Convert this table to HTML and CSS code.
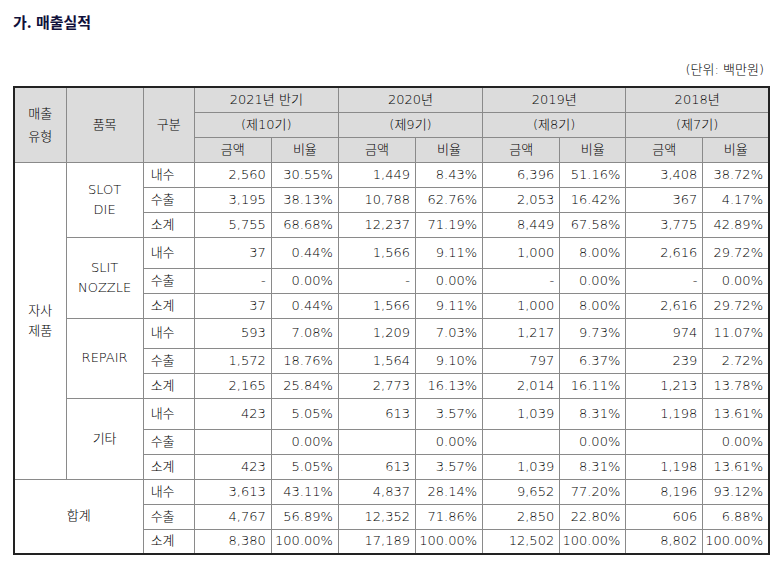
FILE: index.html
```html
<!DOCTYPE html>
<html lang="ko">
<head>
<meta charset="utf-8">
<title>매출실적</title>
<link rel="stylesheet" href="styles.css">
</head>
<body>
<div class="page">
  <h1 class="title">가. 매출실적</h1>
  <div class="unit">(단위: 백만원)</div>
  <table class="sales">
    <colgroup>
      <col class="c-type"><col class="c-item"><col class="c-kind">
      <col class="c-amt"><col class="c-rate">
      <col class="c-amt"><col class="c-rate">
      <col class="c-amt"><col class="c-rate2">
      <col class="c-amt"><col class="c-rate2">
    </colgroup>
    <thead>
      <tr class="h">
        <th rowspan="3" class="two">매출<br>유형</th>
        <th rowspan="3">품목</th>
        <th rowspan="3">구분</th>
        <th colspan="2">2021년 반기</th>
        <th colspan="2">2020년</th>
        <th colspan="2">2019년</th>
        <th colspan="2">2018년</th>
      </tr>
      <tr class="h">
        <th colspan="2">(제10기)</th>
        <th colspan="2">(제9기)</th>
        <th colspan="2">(제8기)</th>
        <th colspan="2">(제7기)</th>
      </tr>
      <tr class="h">
        <th>금액</th><th>비율</th>
        <th>금액</th><th>비율</th>
        <th>금액</th><th>비율</th>
        <th>금액</th><th>비율</th>
      </tr>
    </thead>
    <tbody>
      <tr class="r">
        <td rowspan="12" class="ctr">자사<br>제품</td>
        <td rowspan="3" class="ctr">SLOT<br>DIE</td>
        <td class="k">내수</td>
        <td class="n">2,560</td><td class="n">30.55%</td>
        <td class="n">1,449</td><td class="n">8.43%</td>
        <td class="n">6,396</td><td class="n">51.16%</td>
        <td class="n">3,408</td><td class="n">38.72%</td>
      </tr>
      <tr class="r">
        <td class="k">수출</td>
        <td class="n">3,195</td><td class="n">38.13%</td>
        <td class="n">10,788</td><td class="n">62.76%</td>
        <td class="n">2,053</td><td class="n">16.42%</td>
        <td class="n">367</td><td class="n">4.17%</td>
      </tr>
      <tr class="r">
        <td class="k">소계</td>
        <td class="n">5,755</td><td class="n">68.68%</td>
        <td class="n">12,237</td><td class="n">71.19%</td>
        <td class="n">8,449</td><td class="n">67.58%</td>
        <td class="n">3,775</td><td class="n">42.89%</td>
      </tr>
      <tr class="r tall">
        <td rowspan="3" class="ctr">SLIT<br>NOZZLE</td>
        <td class="k">내수</td>
        <td class="n">37</td><td class="n">0.44%</td>
        <td class="n">1,566</td><td class="n">9.11%</td>
        <td class="n">1,000</td><td class="n">8.00%</td>
        <td class="n">2,616</td><td class="n">29.72%</td>
      </tr>
      <tr class="r">
        <td class="k">수출</td>
        <td class="n">-</td><td class="n">0.00%</td>
        <td class="n">-</td><td class="n">0.00%</td>
        <td class="n">-</td><td class="n">0.00%</td>
        <td class="n">-</td><td class="n">0.00%</td>
      </tr>
      <tr class="r">
        <td class="k">소계</td>
        <td class="n">37</td><td class="n">0.44%</td>
        <td class="n">1,566</td><td class="n">9.11%</td>
        <td class="n">1,000</td><td class="n">8.00%</td>
        <td class="n">2,616</td><td class="n">29.72%</td>
      </tr>
      <tr class="r tall2">
        <td rowspan="3" class="ctr">REPAIR</td>
        <td class="k">내수</td>
        <td class="n">593</td><td class="n">7.08%</td>
        <td class="n">1,209</td><td class="n">7.03%</td>
        <td class="n">1,217</td><td class="n">9.73%</td>
        <td class="n">974</td><td class="n">11.07%</td>
      </tr>
      <tr class="r">
        <td class="k">수출</td>
        <td class="n">1,572</td><td class="n">18.76%</td>
        <td class="n">1,564</td><td class="n">9.10%</td>
        <td class="n">797</td><td class="n">6.37%</td>
        <td class="n">239</td><td class="n">2.72%</td>
      </tr>
      <tr class="r">
        <td class="k">소계</td>
        <td class="n">2,165</td><td class="n">25.84%</td>
        <td class="n">2,773</td><td class="n">16.13%</td>
        <td class="n">2,014</td><td class="n">16.11%</td>
        <td class="n">1,213</td><td class="n">13.78%</td>
      </tr>
      <tr class="r tall">
        <td rowspan="3" class="ctr">기타</td>
        <td class="k">내수</td>
        <td class="n">423</td><td class="n">5.05%</td>
        <td class="n">613</td><td class="n">3.57%</td>
        <td class="n">1,039</td><td class="n">8.31%</td>
        <td class="n">1,198</td><td class="n">13.61%</td>
      </tr>
      <tr class="r">
        <td class="k">수출</td>
        <td class="n"></td><td class="n">0.00%</td>
        <td class="n"></td><td class="n">0.00%</td>
        <td class="n"></td><td class="n">0.00%</td>
        <td class="n"></td><td class="n">0.00%</td>
      </tr>
      <tr class="r">
        <td class="k">소계</td>
        <td class="n">423</td><td class="n">5.05%</td>
        <td class="n">613</td><td class="n">3.57%</td>
        <td class="n">1,039</td><td class="n">8.31%</td>
        <td class="n">1,198</td><td class="n">13.61%</td>
      </tr>
      <tr class="r">
        <td rowspan="3" colspan="2" class="ctr">합계</td>
        <td class="k">내수</td>
        <td class="n">3,613</td><td class="n">43.11%</td>
        <td class="n">4,837</td><td class="n">28.14%</td>
        <td class="n">9,652</td><td class="n">77.20%</td>
        <td class="n">8,196</td><td class="n">93.12%</td>
      </tr>
      <tr class="r">
        <td class="k">수출</td>
        <td class="n">4,767</td><td class="n">56.89%</td>
        <td class="n">12,352</td><td class="n">71.86%</td>
        <td class="n">2,850</td><td class="n">22.80%</td>
        <td class="n">606</td><td class="n">6.88%</td>
      </tr>
      <tr class="r">
        <td class="k">소계</td>
        <td class="n">8,380</td><td class="n">100.00%</td>
        <td class="n">17,189</td><td class="n">100.00%</td>
        <td class="n">12,502</td><td class="n">100.00%</td>
        <td class="n">8,802</td><td class="n">100.00%</td>
      </tr>
    </tbody>
  </table>
</div>
</body>
</html>
```

FILE: styles.css
```css
html, body {
  margin: 0;
  padding: 0;
  background: #ffffff;
}

body {
  font-family: "DejaVu Sans", "Noto Sans CJK KR", sans-serif;
  font-size: 13px;
  color: #000000;
}

.page {
  width: 757px;
  padding: 12px 0 0 13px;
}

.title {
  margin: 0;
  font-family: "Noto Sans CJK KR", sans-serif;
  font-size: 15px;
  font-weight: bold;
  line-height: 20px;
  color: #10103a;
}

.unit {
  margin-top: 30px;
  padding-right: 6px;
  text-align: right;
  line-height: 16px;
  font-weight: 300;
  color: #000000;
}

.sales {
  margin-top: 8px;
  width: 757px;
  border-collapse: collapse;
  table-layout: fixed;
  border: 2px solid #222222;
}

.c-type { width: 52px; }
.c-item { width: 77px; }
.c-kind { width: 51px; }
.c-amt { width: 77px; }
.c-rate { width: 67px; }
.c-rate2 { width: 66px; }

.sales th,
.sales td {
  border: 1px solid #8a8a8a;
  padding: 0;
  line-height: 20px;
  font-weight: 300;
  vertical-align: middle;
  white-space: nowrap;
}

.sales th {
  background: #dcdcdc;
  text-align: center;
}

.sales th.two {
  line-height: 23px;
}

.sales tr.h { height: 25px; }
.sales tr.r { height: 25px; }
.sales tr.tall { height: 31px; }
.sales tr.tall2 { height: 30px; }

.sales td.ctr {
  text-align: center;
}

.sales td.k {
  text-align: left;
  padding-left: 7px;
}

.sales td.n {
  text-align: right;
  padding-right: 5px;
}
```
